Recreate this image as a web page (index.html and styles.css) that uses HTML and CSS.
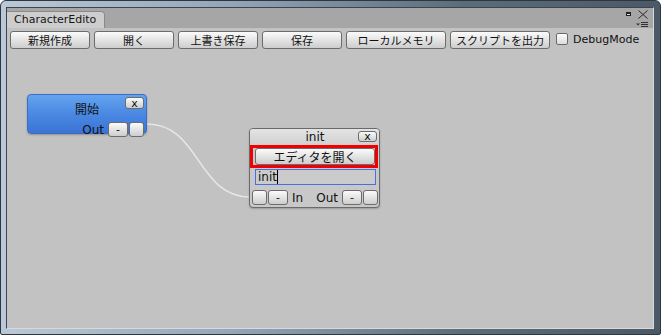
FILE: index.html
```html
<!DOCTYPE html>
<html lang="ja">
<head>
  <meta charset="UTF-8">
  <title>CharacterEditor</title>
  <link rel="stylesheet" href="styles.css">
</head>
<body>
  <div class="window">
    <div class="panel">
      <div class="tabstrip">
        <div class="tab">CharacterEdito</div>
        <div class="win-icons">
          <div class="icon-row">
            <span class="ico-max"></span>
            <svg class="ico-close" width="10" height="9" viewBox="0 0 10 9">
              <path d="M0.5 0.5 L9.5 8.5 M9.5 0.5 L0.5 8.5" stroke="#2b2b2b" stroke-width="1" fill="none"/>
            </svg>
          </div>
          <svg class="ico-menu" width="12" height="6" viewBox="0 0 12 6">
            <path d="M0 1.5 H4 L2 3.5 Z" fill="#333"/>
            <path d="M5 0.5 H12 M5 2.5 H12 M5 4.5 H12" stroke="#333" stroke-width="1"/>
          </svg>
        </div>
      </div>

      <div class="toolbar">
        <button class="tool">新規作成</button>
        <button class="tool">開く</button>
        <button class="tool">上書き保存</button>
        <button class="tool">保存</button>
        <button class="tool wide">ローカルメモリ</button>
        <button class="tool wide">スクリプトを出力</button>
        <label class="debug"><span class="check"></span>DebugMode</label>
      </div>

      <div class="canvas">
        <svg class="links" width="646" height="276">
          <path d="M140 72 C193 72 190 145 243 145" stroke="rgba(255,255,255,0.6)" stroke-width="1.4" fill="none"/>
        </svg>

        <div class="node node-start">
          <div class="node-head">
            <span></span>
            <span class="node-title">開始</span>
            <button class="btn close">x</button>
          </div>
          <div class="port-row right">
            <span class="port-label">Out</span>
            <button class="btn port">-</button>
            <button class="btn port small"></button>
          </div>
        </div>

        <div class="node node-init">
          <div class="node-head">
            <span></span>
            <span class="node-title">init</span>
            <button class="btn close">x</button>
          </div>
          <div class="node-body">
            <div class="highlight">
              <button class="btn open">エディタを開く</button>
            </div>
            <div class="field"><span class="caret">init</span></div>
            <div class="port-row">
              <button class="btn port small"></button>
              <button class="btn port">-</button>
              <span class="port-label in">In</span>
              <span class="spacer"></span>
              <span class="port-label">Out</span>
              <button class="btn port">-</button>
              <button class="btn port small"></button>
            </div>
          </div>
        </div>
      </div>
    </div>
  </div>
</body>
</html>
```

FILE: styles.css
```css
body {
  margin: 0;
  background: #ffffff;
  font-family: "DejaVu Sans", "Noto Sans CJK JP", sans-serif;
  font-size: 11px;
  color: #111;
}
.window {
  width: 661px;
  height: 335px;
  box-sizing: border-box;
  border: 1px solid #2e3640;
  border-radius: 6px 6px 2px 2px;
  padding: 6px 6px 5px 5px;
  background: linear-gradient(to right, #bac8d7 0%, #95a5b7 35%, #5d6c7b 70%, #4b5967 100%);
}
.panel {
  height: 100%;
  box-sizing: border-box;
  border: 1px solid;
  border-color: #3c4450 #d6dadd #d6dadd #3c4450;
  background: #c2c2c2;
  display: flex;
  flex-direction: column;
}

/* tab strip */
.tabstrip {
  height: 20px;
  background: #a6a6a6;
  display: flex;
  justify-content: space-between;
  align-items: flex-end;
}
.tab {
  width: 98px;
  height: 17px;
  box-sizing: border-box;
  background: #cdcdcd;
  border: 1px solid #8a8a8a;
  border-bottom: none;
  border-left: none;
  border-radius: 0 4px 0 0;
  padding-left: 7px;
  line-height: 16px;
  font-size: 11px;
  color: #151515;
}
.win-icons {
  align-self: stretch;
  display: flex;
  flex-direction: column;
  align-items: flex-end;
  padding: 2px 5px 0 0;
}
.icon-row {
  display: flex;
  align-items: flex-start;
  gap: 7px;
}
.ico-max {
  width: 5px;
  height: 4px;
  margin-top: 2px;
  box-sizing: border-box;
  border: 1px solid #222;
  border-top-width: 2px;
  background: #e0e0e0;
}
.ico-close {
  display: block;
}
.ico-menu {
  display: block;
  margin-top: 3px;
}

/* toolbar */
.toolbar {
  height: 24px;
  box-sizing: border-box;
  padding: 3px 3px 0;
  display: flex;
  align-items: flex-start;
  gap: 4px;
}
.tool, .btn {
  box-sizing: border-box;
  margin: 0;
  padding: 0;
  border: 1px solid #6c6c6c;
  border-radius: 3px;
  background: linear-gradient(#fbfbfb, #e6e6e6 45%, #cdcdcd);
  font-family: "Noto Sans CJK JP", "DejaVu Sans", sans-serif;
  font-size: 11px;
  color: #111;
  cursor: pointer;
}
.tool {
  flex: none;
  width: 80px;
  height: 18px;
  line-height: 15px;
}
.tool.wide {
  width: 100px;
}
.debug {
  display: flex;
  align-items: center;
  gap: 5px;
  margin-left: 2px;
  height: 14px;
  margin-top: 1px;
  font-size: 11px;
  color: #111;
}
.check {
  width: 12px;
  height: 12px;
  box-sizing: border-box;
  border: 1px solid #6a6a6a;
  border-radius: 2px;
  background: linear-gradient(#fdfdfd, #dcdcdc);
}

/* node canvas */
.canvas {
  flex: 1;
  position: relative;
}
.links {
  position: absolute;
  left: 0;
  top: 0;
}
.node {
  position: absolute;
  box-sizing: border-box;
  display: flex;
  flex-direction: column;
}
.node-head {
  display: grid;
  grid-template-columns: 1fr auto 1fr;
  align-items: start;
}
.node-title {
  font-family: "Noto Sans CJK JP", "DejaVu Sans", sans-serif;
}
.btn.close {
  justify-self: end;
  width: 19px;
  font-family: "DejaVu Sans", sans-serif;
  font-size: 11px;
}
.node-start {
  left: 20px;
  top: 42px;
  width: 120px;
  height: 40px;
  border: 1px solid #3b6dc4;
  border-radius: 4px;
  background: linear-gradient(#63a3ef, #4a88e2 50%, #3c74d6);
  box-shadow: 0 1px 2px rgba(0, 0, 0, 0.25);
  padding: 2px 2px 0 0;
}
.node-start .node-title {
  font-size: 12px;
  line-height: 14px;
  padding-top: 5px;
  padding-left: 2px;
}
.node-start .btn.close {
  height: 12px;
  line-height: 9px;
}
.node-start .port-row {
  margin-top: 6px;
}
.port-row {
  display: flex;
  align-items: center;
  gap: 1px;
}
.port-row.right {
  justify-content: flex-end;
}
.port-label {
  font-size: 12px;
  margin-right: 3px;
}
.port-label.in {
  margin-left: 3px;
}
.spacer {
  flex: 1;
}
.btn.port {
  width: 20px;
  height: 15px;
  line-height: 12px;
  font-family: "DejaVu Sans", sans-serif;
  font-size: 11px;
}
.btn.port.small {
  width: 15px;
}
.node-init {
  left: 242px;
  top: 76px;
  width: 131px;
  height: 80px;
  border: 1px solid #6a6a6a;
  border-radius: 4px;
  background: #c8c8c8;
  box-shadow: 0 1px 2px rgba(0, 0, 0, 0.2);
}
.node-init .node-head {
  height: 16px;
  padding: 2px 2px 0 0;
  box-sizing: border-box;
  background: linear-gradient(#e4e4e4, #d0d0d0);
  border-radius: 3px 3px 0 0;
}
.node-init .node-title {
  font-family: "DejaVu Sans", sans-serif;
  font-size: 12px;
  line-height: 13px;
  padding-left: 3px;
}
.node-init .btn.close {
  height: 11px;
  line-height: 8px;
}
.node-body {
  display: flex;
  flex-direction: column;
}
.highlight {
  margin-right: 1px;
  border: 3px solid #f00000;
  padding-left: 2px;
  display: flex;
}
.btn.open {
  flex: 1;
  height: 17px;
  line-height: 14px;
  font-size: 12px;
}
.field {
  margin: 1px 3px 0 5px;
  height: 16px;
  box-sizing: border-box;
  border: 1px solid #4a6ee2;
  background: #cbcbcb;
  padding-left: 2px;
  font-size: 12px;
  line-height: 14px;
}
.caret {
  border-right: 1px solid #000;
}
.node-init .port-row {
  margin: 5px 1px 0 2px;
}
```
